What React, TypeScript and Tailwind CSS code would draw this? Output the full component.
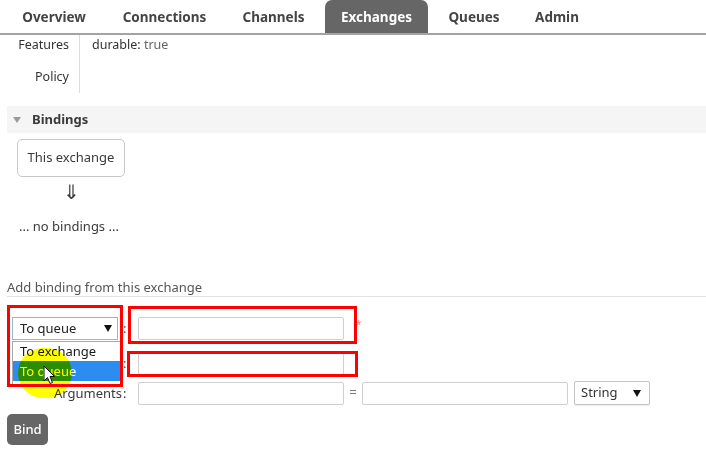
import React from "react";

const tabs = [
  { label: "Overview", w: "w-[96px]" },
  { label: "Connections", w: "w-[115px]" },
  { label: "Channels", w: "w-[93px]" },
  { label: "Exchanges", w: "w-[103px]", active: true },
  { label: "Queues", w: "w-[82px]" },
  { label: "Admin", w: "w-[74px]" },
];

const Caret = () => (
  <svg width="8" height="7" viewBox="0 0 8 7" className="shrink-0">
    <path d="M0 0 L8 0 L4 7 Z" fill="#111" />
  </svg>
);

const Input = ({ className = "" }: { className?: string }) => (
  <div
    className={`h-[23px] rounded-[2px] border border-[#cfcfcf] bg-white ${className}`}
  />
);

export default function App() {
  return (
    <div className="relative h-[450px] w-[706px] overflow-hidden bg-white font-['Noto_Sans',sans-serif] text-[13px] text-[#444]">
      {/* tabs */}
      <nav className="flex h-[35px] items-end gap-[5px] border-b-2 border-[#a3a3a3] pl-[6px]">
        {tabs.map((t) => (
          <div
            key={t.label}
            className={`flex h-[33px] items-center justify-center rounded-t-[7px] pt-[2px] text-[13.5px] font-bold ${t.w} ${
              t.active ? "bg-[#666] text-white" : "text-[#444]"
            }`}
          >
            {t.label}
          </div>
        ))}
      </nav>

      {/* details table */}
      <div className="flex text-[12.5px]">
        <div className="flex w-[80px] flex-col items-end border-r border-[#dcdcdc] pr-[10px] pb-[7px] text-[#333]">
          <div className="mt-[1px] leading-[18px]">Features</div>
          <div className="mt-[14px] leading-[18px]">Policy</div>
        </div>
        <div className="mt-[1px] pl-[12px] leading-[18px] text-[#333]">
          durable: <span className="text-[#666]">true</span>
        </div>
      </div>

      {/* bindings */}
      <div className="ml-[7px] mt-[13px] flex h-[27px] items-center gap-[11px] bg-[#f5f5f5] pl-[6px]">
        <svg width="8" height="6" viewBox="0 0 8 6">
          <path d="M0 0 L8 0 L4 6 Z" fill="#9a9a9a" />
        </svg>
        <span className="font-bold text-[#3a3a3a]">Bindings</span>
      </div>

      <div className="ml-[17px] mt-[6px] flex h-[38px] w-[108px] items-center justify-center rounded-[5px] border border-[#c8c8c8] text-[#3a3a3a]">
        This exchange
      </div>
      <div className="ml-[17px] mt-[4px] h-[22px] w-[108px] text-center text-[20px] leading-[22px] text-[#333]">
        ⇓
      </div>
      <div className="ml-[19px] mt-[14px] leading-[18px] text-[#3a3a3a]">
        ... no bindings ...
      </div>

      {/* add binding */}
      <div className="ml-[7px] mt-[43px] border-b border-[#e3e3e3] leading-[18px] text-[#555]">
        Add binding from this exchange
      </div>

      <div className="ml-[12px] mt-[20px] flex flex-col">
        <div className="flex items-center">
          <div className="flex h-[23px] w-[106px] items-center justify-between border border-[#9fb3c8] bg-white pl-[7px] pr-[5px] text-[#222]">
            <span>To queue</span>
            <Caret />
          </div>
          <span className="w-[20px] pl-[5px] text-[#555]">:</span>
          <Input className="w-[206px]" />
          <span className="ml-[12px] -mt-[8px] text-[10px] text-[#f08a8a]">*</span>
        </div>
        <div className="mt-[12px] flex items-center">
          <span className="w-[110px]" />
          <span className="w-[16px] pl-[1px] text-[#555]">:</span>
          <Input className="w-[206px]" />
        </div>
        <div className="mt-[6px] flex items-center">
          <span className="w-[110px] pt-[2px] text-right text-[#3a3a3a]">Arguments</span>
          <span className="w-[16px] pl-[1px] pt-[2px] text-[#3a3a3a]">:</span>
          <Input className="w-[206px]" />
          <span className="w-[18px] text-center text-[#777]">=</span>
          <Input className="w-[206px]" />
          <div className="ml-[6px] flex h-[24px] w-[76px] items-center justify-between rounded-[2px] border border-[#c4c4c4] bg-white pl-[6px] pr-[8px] text-[#333] shadow-[0_1px_1px_rgba(0,0,0,0.08)]">
            <span>String</span>
            <Caret />
          </div>
        </div>
      </div>

      <button className="ml-[7px] mt-[9px] h-[31px] w-[41px] rounded-[5px] bg-[#666] text-[13px] font-medium text-white">
        Bind
      </button>

      {/* open dropdown */}
      <div className="absolute left-[12px] top-[341px] w-[109px] border border-[#a8a8a8] bg-white pb-[3px] text-[#1a1a1a]">
        <div className="h-[19px] pl-[7px] leading-[19px]">To exchange</div>
        <div className="h-[20px] bg-[#2d8cf0] pl-[7px] leading-[20px] text-white">
          To queue
        </div>
      </div>

      {/* cursor highlight */}
      <div className="pointer-events-none absolute left-[18px] top-[348px] h-[50px] w-[54px] rounded-full bg-[#ffff00] mix-blend-multiply" />

      {/* red annotation boxes */}
      <div className="pointer-events-none absolute left-[7px] top-[305px] h-[82px] w-[116px] border-[3px] border-[#ff0000]" />
      <div className="pointer-events-none absolute left-[128px] top-[306px] h-[38px] w-[229px] border-[3px] border-[#ff0000]" />
      <div className="pointer-events-none absolute left-[127px] top-[351px] h-[26px] w-[231px] border-[3px] border-[#ff0000]" />

      {/* mouse pointer */}
      <svg
        width="13"
        height="20"
        viewBox="0 0 13 20"
        className="pointer-events-none absolute left-[43px] top-[365px]"
      >
        <path
          d="M1 1 L1 16 L4.5 12.5 L7 18.5 L9.5 17.5 L7 11.5 L11.5 11.5 Z"
          fill="#fff"
          stroke="#111"
          strokeWidth="1"
          strokeLinejoin="round"
        />
      </svg>
    </div>
  );
}
